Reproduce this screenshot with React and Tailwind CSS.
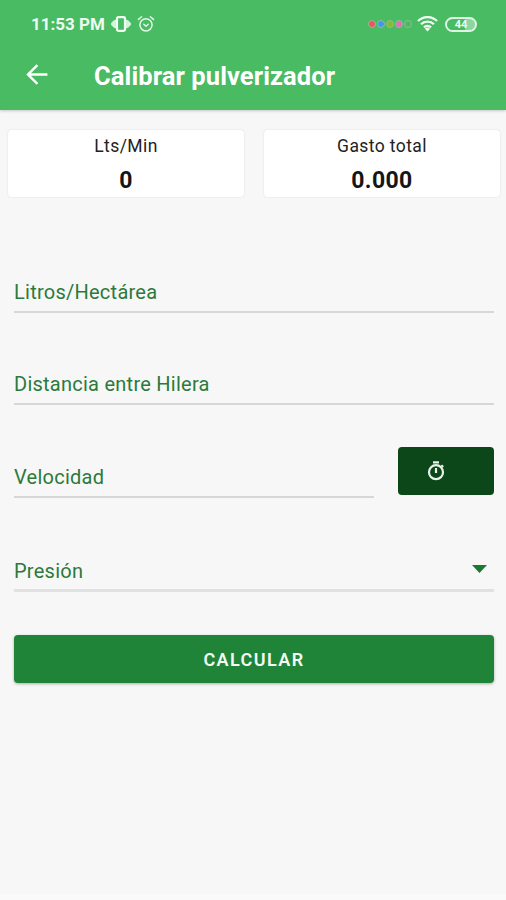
import React from "react";

const statusDots = [
  { id: "red", className: "bg-[#f0555a]" },
  { id: "blue", className: "bg-[#4596e8]" },
  { id: "green", className: "bg-[#86bb2c]" },
  { id: "pink", className: "bg-[#e070b4]" },
  { id: "empty", className: "bg-transparent" },
];

const VibrateIcon = () => (
  <svg className="w-[20px] h-[18px]" viewBox="0 0 20 18" fill="none">
    <rect
      x="6"
      y="2.2"
      width="8"
      height="13.6"
      rx="1.3"
      stroke="#effaf0"
      strokeWidth="2.2"
    />
    <path
      d="M5 4.4v9.2l-2.4-1.2L0 9.8V8.2l2.6-2.6zM15 4.4v9.2l2.4-1.2L20 9.8V8.2l-2.6-2.6z"
      fill="#d6f2db"
    />
  </svg>
);

const AlarmIcon = () => (
  <svg
    className="w-[18px] h-[18px]"
    viewBox="0 0 18 18"
    fill="none"
    stroke="#e4f6e7"
    strokeWidth="1.5"
    strokeLinecap="round"
    strokeLinejoin="round"
  >
    <circle cx="9" cy="9.8" r="6.1" />
    <path d="M1.5 4.4 4.6 1.8M16.5 4.4l-3.1-2.6M6.8 9.2l2.2 2 2.2-2" />
  </svg>
);

const WifiIcon = () => (
  <svg className="w-[21px] h-[16px]" viewBox="0 0 21 16" fill="none">
    <path
      d="M1 5a13.6 13.6 0 0 1 19 0M4 8.3a9.3 9.3 0 0 1 13 0M7 11.4a5 5 0 0 1 7 0"
      stroke="#effaf0"
      strokeWidth="2.3"
    />
    <path d="M10.5 15.6 7.9 12.8a3.8 3.8 0 0 1 5.2 0z" fill="#effaf0" />
  </svg>
);

const BackIcon = () => (
  <svg
    className="w-[22px] h-[22px]"
    viewBox="0 0 22 22"
    fill="none"
    stroke="#fff"
    strokeWidth="2.4"
  >
    <path d="M21.4 10.5H2.2M11.4 1.1 2 10.5l9.4 9.4" />
  </svg>
);

const TimerIcon = () => (
  <svg
    className="w-[18px] h-[20px]"
    viewBox="0 0 18 20"
    fill="none"
    stroke="#e9f1e9"
    strokeWidth="2.2"
  >
    <circle cx="9" cy="11.2" r="7" />
    <path d="M6 1.4h6M9 7v5M14.3 4.3l1.9 1.7" />
  </svg>
);

const StatusBar = () => (
  <div className="h-12 pl-[31px] pr-[29px] flex items-center justify-between">
    <div className="flex items-center">
      <span className="w-[80px] pt-[1px] text-[17px] font-bold leading-none text-[#effaf0] whitespace-nowrap">
        11:53 PM
      </span>
      <VibrateIcon />
      <div className="ml-[6px]">
        <AlarmIcon />
      </div>
    </div>
    <div className="flex items-center">
      <div className="flex gap-[1px]">
        {statusDots.map((dot) => (
          <span
            key={dot.id}
            className={`w-[8px] h-[8px] rounded-full border border-[#8fbb98] ${dot.className}`}
          />
        ))}
      </div>
      <div className="ml-[5px]">
        <WifiIcon />
      </div>
      <div className="ml-[7px] w-[32px] h-[15px] pt-[1px] rounded-full border-2 border-[#dff5e3] flex items-center justify-center bg-linear-to-r from-[#48bb63] from-65% to-[#8fd5a0] to-65% text-[11px] font-bold leading-none text-[#effaf0]">
        44
      </div>
    </div>
  </div>
);

const ResultCard = ({ label, value }) => (
  <div className="flex-1 h-[67px] pt-[5px] bg-white rounded-[4px] shadow-[0_0_2px_rgba(0,0,0,0.12)] text-center">
    <p className="text-[17.5px] leading-[22px] tracking-[0.4px] text-[#222]">
      {label}
    </p>
    <p className="mt-[10px] text-[23px] leading-[28px] font-bold tracking-[0.4px] text-[#151515]">
      {value}
    </p>
  </div>
);

const Field = ({ label }) => (
  <div className="h-[34px] pt-[1px] border-b-2 border-[#d6d7d6] text-[20px] leading-[24px] tracking-[0.25px] text-[#2b7a3c]">
    {label}
  </div>
);

const App = () => {
  return (
    <div className="h-[900px] flex flex-col bg-[#f7f7f7] font-['Roboto',sans-serif]">
      <header className="h-[110px] shrink-0 bg-[#48bb63] shadow-[0_1px_3px_rgba(0,0,0,0.2)]">
        <StatusBar />
        <div className="h-[54px] pl-[26px] flex items-center">
          <BackIcon />
          <h1 className="ml-[46px] pt-[3px] text-[25.5px] font-bold leading-none tracking-[0.1px] text-white">
            Calibrar pulverizador
          </h1>
        </div>
      </header>

      <main className="flex-1">
        <section className="pt-[20px] pl-[8px] pr-[6px] flex gap-[20px]">
          <ResultCard label="Lts/Min" value="0" />
          <ResultCard label="Gasto total" value="0.000" />
        </section>

        <form className="mt-[82px] pl-[14px] pr-[12px]">
          <Field label="Litros/Hectárea" />
          <div className="mt-[58px]">
            <Field label="Distancia entre Hilera" />
          </div>

          <div className="mt-[42px] flex items-start gap-[24px]">
            <div className="flex-1 mt-[17px]">
              <Field label="Velocidad" />
            </div>
            <button
              type="button"
              className="w-[96px] h-[48px] pl-[29px] flex items-center rounded-[4px] bg-[#0c4719]"
            >
              <TimerIcon />
            </button>
          </div>

          <div className="mt-[60px] h-[34px] pt-[1px] flex justify-between border-b-[3px] border-[#dfe2e1] text-[20px] leading-[24px] tracking-[0.25px] text-[#2b7a3c]">
            <span>Presión</span>
            <svg className="mt-[6px] mr-[7px] w-[15px] h-[8px]" viewBox="0 0 15 8">
              <path d="M0 0h15L7.5 8z" fill="#1b7a2f" />
            </svg>
          </div>

          <button
            type="button"
            className="mt-[43px] w-full h-[48px] pt-[1px] rounded-[4px] bg-[#1f8438] shadow-[0_1px_3px_rgba(0,0,0,0.3)] text-[18px] font-semibold tracking-[1.4px] text-[#f3faf3]"
          >
            CALCULAR
          </button>
        </form>
      </main>

      <div className="h-[6px] bg-[#fafafa]" />
    </div>
  );
};

export default App;
